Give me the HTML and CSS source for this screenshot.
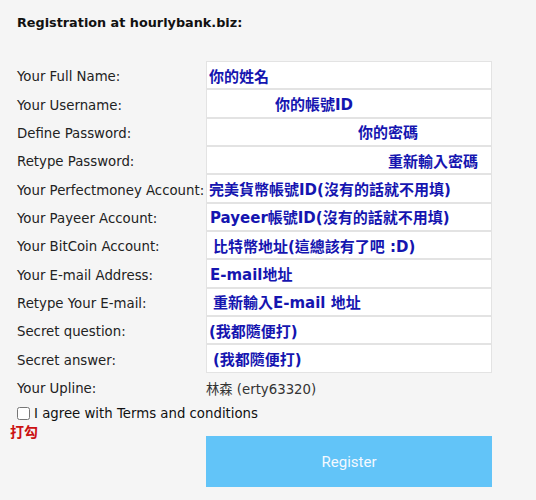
FILE: index.html
```html
<!DOCTYPE html>
<html>
<head>
    <meta charset="utf-8">
    <title>Registration</title>
    <link rel="stylesheet" href="styles.css">
</head>
<body>
    <div class="container">
        <h3>Registration at hourlybank.biz:</h3>
        <form id="regForm" class="reg-grid">
            <label for="fullname">Your Full Name:</label>
            <input type="text" id="fullname" value="你的姓名">

            <label for="username">Your Username:</label>
            <input type="text" id="username" class="ind-66" value="你的帳號ID">

            <label for="password">Define Password:</label>
            <input type="text" id="password" class="ind-150" value="你的密碼">

            <label for="password2">Retype Password:</label>
            <input type="text" id="password2" class="ind-180" value="重新輸入密碼">

            <label for="pm">Your Perfectmoney Account:</label>
            <input type="text" id="pm" value="完美貨幣帳號ID(沒有的話就不用填)">

            <label for="payeer">Your Payeer Account:</label>
            <input type="text" id="payeer" class="ind-1" value="Payeer帳號ID(沒有的話就不用填)">

            <label for="btc">Your BitCoin Account:</label>
            <input type="text" id="btc" class="ind-4" value="比特幣地址(這總該有了吧 :D)">

            <label for="email">Your E-mail Address:</label>
            <input type="text" id="email" class="ind-1" value="E-mail地址">

            <label for="email2">Retype Your E-mail:</label>
            <input type="text" id="email2" class="ind-4" value="重新輸入E-mail 地址">

            <label for="sq">Secret question:</label>
            <input type="text" id="sq" value="(我都隨便打)">

            <label for="sa">Secret answer:</label>
            <input type="text" id="sa" class="ind-4" value="(我都隨便打)">

            <span class="lbl">Your Upline:</span>
            <span class="upline">林森 (erty63320)</span>
        </form>

        <div class="agree">
            <input type="checkbox" id="agree">
            <label for="agree">I agree with Terms and conditions</label>
        </div>
        <div class="note">打勾</div>
        <div class="btn-row">
            <button type="submit" form="regForm">Register</button>
        </div>
    </div>
</body>
</html>
```

FILE: styles.css
```css
body {
    margin: 0;
    background-color: #f5f5f5;
    font-family: "DejaVu Sans", Verdana, sans-serif;
    color: #111;
}

.container {
    padding: 0 0 0 17px;
}

h3 {
    margin: 0;
    padding-top: 15px;
    height: 61px;
    box-sizing: border-box;
    font-size: 12.8px;
    font-weight: bold;
}

.reg-grid {
    display: grid;
    grid-template-columns: 189px 286px;
    grid-auto-rows: 28.35px;
    align-items: center;
}

.reg-grid label,
.lbl {
    padding-top: 3px;
    font-size: 13.3px;
    color: #222;
}

.reg-grid input {
    height: 100%;
    box-sizing: border-box;
    margin: 0;
    padding: 0 0 0 2px;
    border: 1px solid #e3e3e3;
    background-color: #fff;
    color: #1515b0;
    font-family: "DejaVu Sans", "Noto Sans CJK TC", sans-serif;
    font-size: 15px;
    font-weight: bold;
    outline: none;
}

/* indents from the screenshot */
.reg-grid .ind-1 { padding-left: 3px; }
.reg-grid .ind-4 { padding-left: 6px; }
.reg-grid .ind-66 { padding-left: 68px; }
.reg-grid .ind-150 { padding-left: 151px; }
.reg-grid .ind-180 { padding-left: 181px; }

.upline {
    padding-top: 3px;
    font-family: "DejaVu Sans", "Noto Sans CJK TC", sans-serif;
    font-size: 13.3px;
    color: #333;
}

.agree {
    display: flex;
    align-items: center;
    height: 24px;
    padding-top: 1px;
    box-sizing: border-box;
    font-size: 13.3px;
}

.agree input {
    margin: 0 4px 0 0;
    width: 13px;
    height: 13px;
}

.note {
    margin-left: -7px;
    height: 11px;
    line-height: 12px;
    font-family: "Noto Sans CJK TC", sans-serif;
    font-size: 14px;
    font-weight: bold;
    color: #cc1111;
}

.btn-row {
    padding-left: 189px;
}

button {
    width: 286px;
    height: 51px;
    border: none;
    background-color: #62c4f8;
    color: #f4f9ff;
    font-family: Roboto, sans-serif;
    font-size: 15px;
    cursor: pointer;
}
```
